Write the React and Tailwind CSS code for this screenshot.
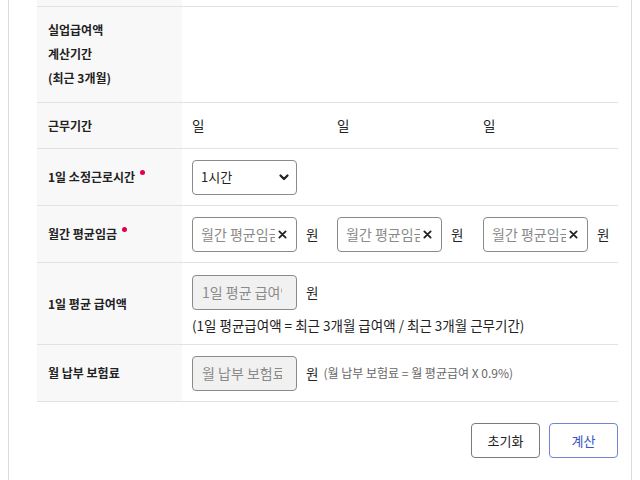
import React from "react";

const font = { fontFamily: '"Noto Sans CJK KR", "Noto Sans", sans-serif' };

function Dot() {
  return <span className="relative -top-[6px] ml-[5px] inline-block h-[5px] w-[5px] rounded-full bg-[#e0004d] align-middle" />;
}

function ClearInput() {
  return (
    <div className="relative flex h-[35px] w-[105px] shrink-0 items-center rounded-[4px] border border-[#8a8a8a] bg-white">
      <div className="ml-[8px] w-[74px] overflow-hidden whitespace-nowrap text-[14px] leading-[33px] text-[#8a8a8a]">월간 평균임금</div>
      <svg className="ml-[3px]" width="9" height="9" viewBox="0 0 10 10" fill="none" stroke="#222" strokeWidth="2" strokeLinecap="round">
        <path d="M1.5 1.5l7 7M8.5 1.5l-7 7" />
      </svg>
    </div>
  );
}

function GrayInput({ text }) {
  return (
    <div className="h-[35px] w-[105px] shrink-0 rounded-[4px] border border-[#8a8a8a] bg-[#f1f1f1]">
      <div className="ml-[9px] w-[80px] overflow-hidden whitespace-nowrap text-[14px] leading-[33px] text-[#8a8a8a]">{text}</div>
    </div>
  );
}

function Row({ label, children, h, labelTop }) {
  return (
    <div className={`flex border-b border-[#e2e2e2] ${h}`}>
      <div className={`flex w-[145px] shrink-0 bg-[#f8f8f8] pl-[11px] text-[12px] font-bold text-[#222] ${labelTop ? "items-start pt-[11px]" : "items-center"}`}>
        {label}
      </div>
      <div className="flex flex-1 items-center pl-[10px] text-[13.5px] text-[#222]">{children}</div>
    </div>
  );
}

function Won({ w }) {
  return <span className={`ml-[9px] shrink-0 ${w}`}>원</span>;
}

export default function App() {
  return (
    <div className="h-[480px] w-[640px] overflow-hidden bg-white" style={font}>
      <div className="ml-[8px] h-[480px] w-[624px] border-x border-[#dcdcdc] pl-[28px] pr-[13px]">
        <div className="flex h-[7px] border-b border-[#e2e2e2]">
          <div className="w-[145px] bg-[#f8f8f8]" />
        </div>
        <Row
          h="h-[96px]"
          labelTop
          label={
            <div className="leading-[24px]">
              <div>실업급여액</div>
              <div>계산기간</div>
              <div>(최근 3개월)</div>
            </div>
          }
        />
        <Row h="h-[46px]" label="근무기간">
          <span className="w-[145px]">일</span>
          <span className="w-[146px]">일</span>
          <span>일</span>
        </Row>
        <Row h="h-[57px]" label={<span>1일 소정근로시간<Dot /></span>}>
          <div className="flex h-[35px] w-[105px] items-center justify-between rounded-[4px] border border-[#8a8a8a] bg-white pl-[8px] pr-[6px]">
            <span className="text-[13px] text-[#222]">1시간</span>
            <svg width="12" height="12" viewBox="0 0 24 24" fill="none" stroke="#222" strokeWidth="4.5" strokeLinecap="round" strokeLinejoin="round">
              <path d="M5 9l7 7 7-7" />
            </svg>
          </div>
        </Row>
        <Row h="h-[57px]" label={<span>월간 평균임금<Dot /></span>}>
          <ClearInput />
          <Won w="w-[31px]" />
          <ClearInput />
          <Won w="w-[32px]" />
          <ClearInput />
          <Won w="" />
        </Row>
        <Row h="h-[82px]" label="1일 평균 급여액">
          <div className="flex flex-col pt-[2px]">
            <div className="flex items-center">
              <GrayInput text="1일 평균 급여액" />
              <Won w="" />
            </div>
            <div className="mt-[5px] whitespace-nowrap leading-[20px] text-[#222]">(1일 평균급여액 = 최근 3개월 급여액 / 최근 3개월 근무기간)</div>
          </div>
        </Row>
        <Row h="h-[57px]" label="월 납부 보험료">
          <GrayInput text="월 납부 보험료" />
          <Won w="" />
          <span className="ml-[5px] text-[12px] text-[#666]">(월 납부 보험료 = 월 평균급여 X 0.9%)</span>
        </Row>
        <div className="mt-[21px] flex justify-end gap-[9px]">
          <button className="h-[35px] w-[69px] rounded-[4px] border border-[#7a7a7a] bg-white text-[13px] text-[#222]">초기화</button>
          <button className="h-[35px] w-[69px] rounded-[4px] border border-[#6f86d6] bg-white text-[13px] text-[#3654c4]">계산</button>
        </div>
      </div>
    </div>
  );
}
